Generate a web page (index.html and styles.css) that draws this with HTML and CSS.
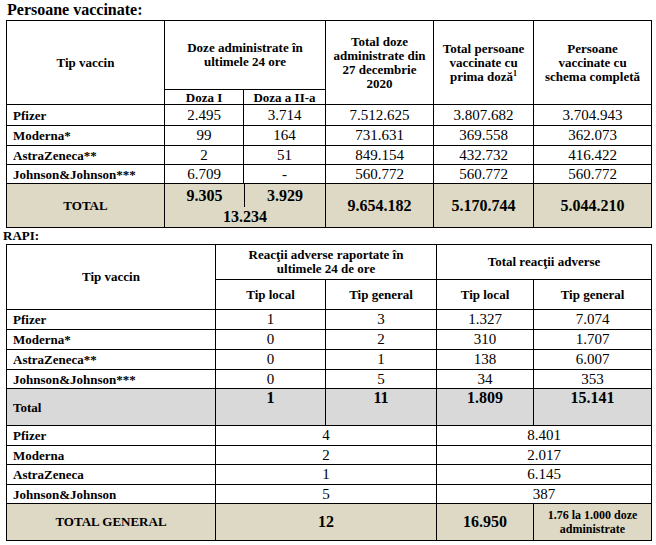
FILE: index.html
```html
<!DOCTYPE html>
<html lang="ro">
<head>
<meta charset="utf-8">
<title>Persoane vaccinate</title>
<link rel="stylesheet" href="styles.css">
</head>
<body>
<div class="page">
  <h1 class="title">Persoane vaccinate:</h1>
  <table class="grid t1">
    <colgroup>
      <col class="c158"><col class="c79"><col class="c82"><col class="c108"><col class="c100"><col class="c118">
    </colgroup>
    <tr class="h69">
      <th rowspan="2">Tip vaccin</th>
      <th colspan="2">Doze administrate în<br>ultimele 24 ore</th>
      <th rowspan="2">Total doze<br>administrate din<br>27 decembrie<br>2020</th>
      <th rowspan="2">Total persoane<br>vaccinate cu<br>prima doză<sup>1</sup></th>
      <th rowspan="2">Persoane<br>vaccinate cu<br>schema completă</th>
    </tr>
    <tr class="h15">
      <th class="sub">Doza I</th>
      <th class="sub">Doza a II-a</th>
    </tr>
    <tr class="h21"><td class="name">Pfizer</td><td class="num">2.495</td><td class="num">3.714</td><td class="num">7.512.625</td><td class="num">3.807.682</td><td class="num">3.704.943</td></tr>
    <tr class="h20"><td class="name">Moderna*</td><td class="num">99</td><td class="num">164</td><td class="num">731.631</td><td class="num">369.558</td><td class="num">362.073</td></tr>
    <tr class="h19"><td class="name">AstraZeneca**</td><td class="num">2</td><td class="num">51</td><td class="num">849.154</td><td class="num">432.732</td><td class="num">416.422</td></tr>
    <tr class="h19"><td class="name">Johnson&amp;Johnson***</td><td class="num">6.709</td><td class="num">-</td><td class="num">560.772</td><td class="num">560.772</td><td class="num">560.772</td></tr>
    <tr class="h44 beige">
      <td class="lbl">TOTAL</td>
      <td colspan="2" class="split-cell">
        <div class="split"><div class="half first">9.305</div><div class="half">3.929</div></div>
        <div class="sum">13.234</div>
      </td>
      <td class="tot">9.654.182</td>
      <td class="tot">5.170.744</td>
      <td class="tot">5.044.210</td>
    </tr>
  </table>
  <div class="label">RAPI:</div>
  <table class="grid t2">
    <colgroup>
      <col class="c209"><col class="c110"><col class="c111"><col class="c97"><col class="c118">
    </colgroup>
    <tr class="h35">
      <th rowspan="2">Tip vaccin</th>
      <th colspan="2">Reacţii adverse raportate în<br>ultimele 24 de ore</th>
      <th colspan="2">Total reacţii adverse</th>
    </tr>
    <tr class="h30">
      <th>Tip local</th><th>Tip general</th><th>Tip local</th><th>Tip general</th>
    </tr>
    <tr class="h20"><td class="name">Pfizer</td><td class="num">1</td><td class="num">3</td><td class="num">1.327</td><td class="num">7.074</td></tr>
    <tr class="h20"><td class="name">Moderna*</td><td class="num">0</td><td class="num">2</td><td class="num">310</td><td class="num">1.707</td></tr>
    <tr class="h20"><td class="name">AstraZeneca**</td><td class="num">0</td><td class="num">1</td><td class="num">138</td><td class="num">6.007</td></tr>
    <tr class="h19"><td class="name">Johnson&amp;Johnson***</td><td class="num">0</td><td class="num">5</td><td class="num">34</td><td class="num">353</td></tr>
    <tr class="h37 gray">
      <td class="name">Total</td>
      <td class="topnum">1</td><td class="topnum">11</td><td class="topnum">1.809</td><td class="topnum">15.141</td>
    </tr>
    <tr class="h20"><td class="name">Pfizer</td><td colspan="2" class="num">4</td><td colspan="2" class="num">8.401</td></tr>
    <tr class="h19"><td class="name">Moderna</td><td colspan="2" class="num">2</td><td colspan="2" class="num">2.017</td></tr>
    <tr class="h20"><td class="name">AstraZeneca</td><td colspan="2" class="num">1</td><td colspan="2" class="num">6.145</td></tr>
    <tr class="h19"><td class="name">Johnson&amp;Johnson</td><td colspan="2" class="num">5</td><td colspan="2" class="num">387</td></tr>
    <tr class="h37 beige">
      <td class="lbl">TOTAL GENERAL</td>
      <td colspan="2" class="tot">12</td>
      <td class="tot">16.950</td>
      <td class="note">1.76 la 1.000 doze<br>administrate</td>
    </tr>
  </table>
</div>
</body>
</html>
```
FILE: styles.css
```css
html, body {
  margin: 0;
  padding: 0;
  background: #fff;
}
body {
  font-family: "Liberation Serif", "Times New Roman", serif;
  color: #000;
}
.page {
  width: 656px;
  height: 545px;
  padding-left: 6px;
  box-sizing: border-box;
}
.title {
  margin: 0;
  height: 20px;
  font-size: 16px;
  line-height: 20px;
  font-weight: bold;
  padding-left: 1px;
}
.label {
  height: 16px;
  font-size: 13px;
  line-height: 16px;
  font-weight: bold;
  margin-left: -3px;
}
.grid {
  border-collapse: collapse;
  table-layout: fixed;
  width: 645px;
}
.grid th, .grid td {
  border: 1px solid #000;
  padding: 0;
  overflow: visible;
}
.grid th {
  font-size: 13px;
  line-height: 14px;
  font-weight: bold;
  text-align: center;
  vertical-align: middle;
}
.grid th sup {
  font-size: 8px;
  line-height: 0;
  vertical-align: 5px;
}
.c158 { width: 158px; }
.c79 { width: 79px; }
.c82 { width: 82px; }
.c108 { width: 108px; }
.c100 { width: 100px; }
.c118 { width: 118px; }
.c209 { width: 209px; }
.c110 { width: 110px; }
.c111 { width: 111px; }
.c97 { width: 97px; }

.h69 { height: 69px; }
.h15 { height: 15px; }
.h21 { height: 21px; }
.h20 { height: 20px; }
.h19 { height: 19px; }
.h44 { height: 44px; }
.h35 { height: 35px; }
.h30 { height: 30px; }
.h37 { height: 37px; }

.grid th.sub {
  line-height: 13px;
}
.name {
  font-size: 13px;
  line-height: 15px;
  font-weight: bold;
  text-align: left;
  vertical-align: middle;
  padding-left: 6px !important;
  white-space: nowrap;
}
.num {
  font-size: 15px;
  line-height: 17px;
  text-align: center;
  vertical-align: middle;
}
.topnum {
  font-size: 16px;
  line-height: 18px;
  font-weight: bold;
  text-align: center;
  vertical-align: top;
}
.lbl {
  font-size: 13px;
  font-weight: bold;
  text-align: center;
  vertical-align: middle;
}
.tot {
  font-size: 16px;
  font-weight: bold;
  text-align: center;
  vertical-align: middle;
}
.note {
  font-size: 12px;
  line-height: 14px;
  font-weight: bold;
  text-align: center;
  vertical-align: middle;
}
.beige td { background: #ddd9c4; }
.gray td { background: #d9d9d9; }

.split-cell {
  vertical-align: top;
}
.split {
  display: flex;
  height: 23px;
  font-size: 16px;
  font-weight: bold;
  line-height: 23px;
  text-align: center;
}
.half {
  flex: 1 1 0;
}
.half.first {
  flex: 0 0 79px;
  border-right: 1px solid #000;
}
.sum {
  font-size: 16px;
  font-weight: bold;
  line-height: 19px;
  text-align: center;
}
```
